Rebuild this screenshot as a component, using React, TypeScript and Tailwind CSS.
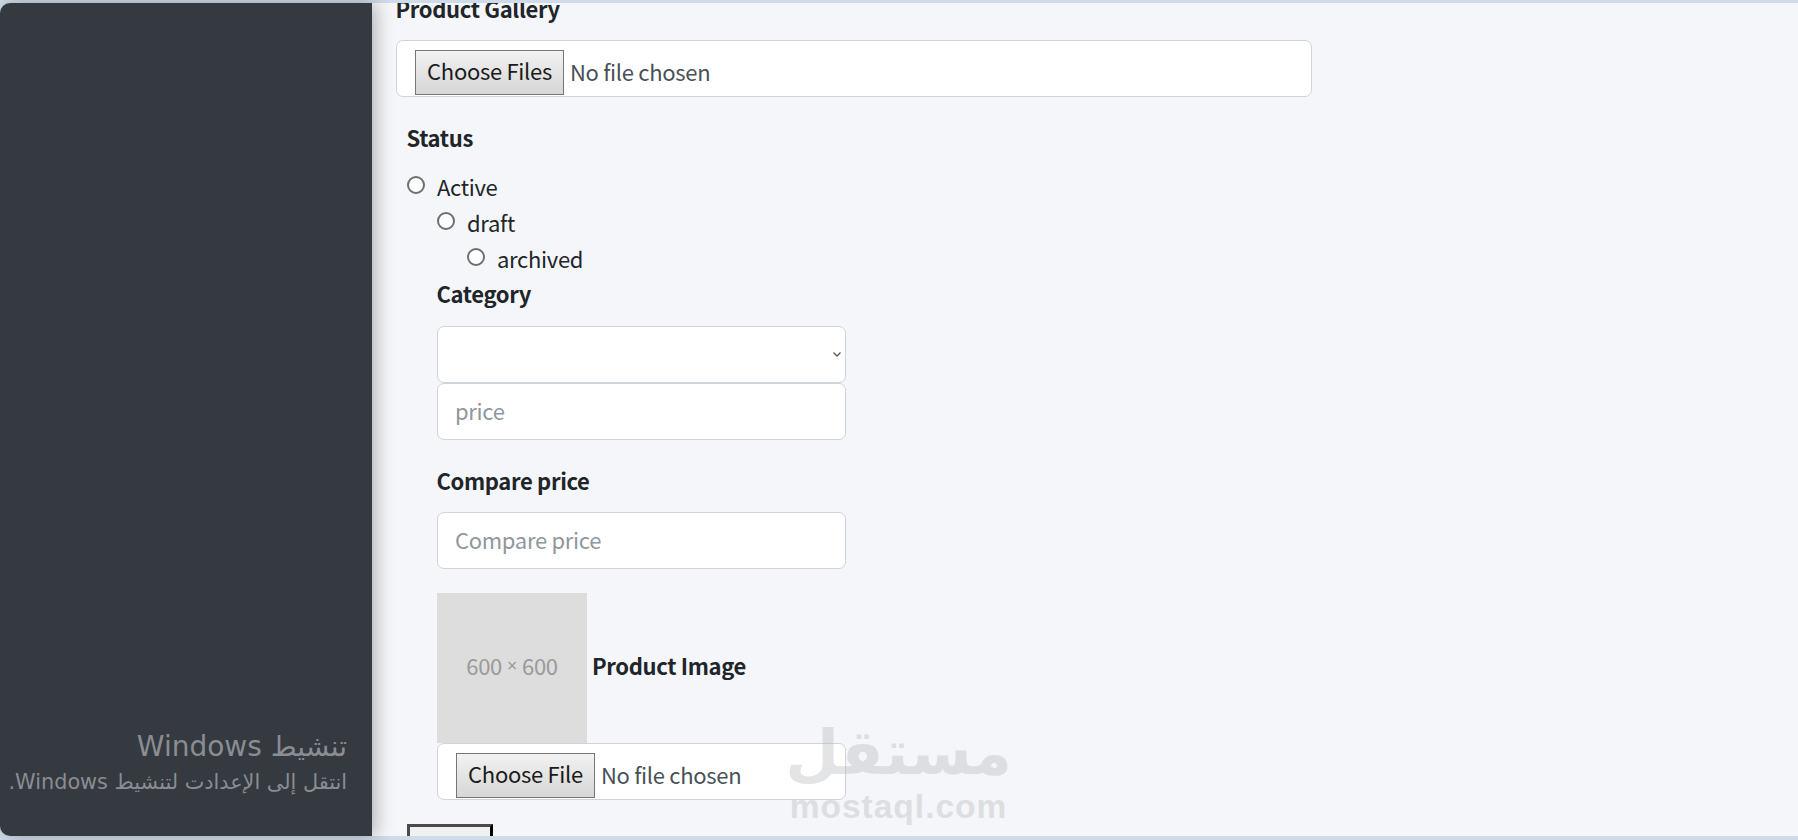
import React from 'react';

const bodyFont = "font-['Noto_Sans_CJK_SC','Noto_Sans',sans-serif]";

function FieldLabel({ children, className = '' }: { children: React.ReactNode; className?: string }) {
  return <div className={`-ml-[0.5px] h-[30px] text-[22px] font-bold leading-[27px] tracking-[-0.35px] text-[#212529] ${className}`}>{children}</div>;
}

function FileField({ label, className = '', buttonClass = '' }: { label: string; className?: string; buttonClass?: string }) {
  return (
    <div className={`flex h-[57px] items-center rounded-[7px] border border-[#ced4da] bg-white ${className}`}>
      <button
        type="button"
        className={`mt-[8px] h-[45px] shrink-0 border border-[#767676] bg-gradient-to-b from-[#f2f2f2] to-[#d6d6d6] pb-[6px] text-center text-[22px] leading-[36px] tracking-[-0.3px] text-[#1a1a1a] ${buttonClass}`}
      >
        {label}
      </button>
      <span className="ml-[6px] mt-[4px] text-[22px] leading-[30px] tracking-[-0.3px] text-[#495057]">No file chosen</span>
    </div>
  );
}

function RadioRow({ label, className = '' }: { label: string; className?: string }) {
  return (
    <label className={`flex h-[36px] items-center ${className}`}>
      <input type="radio" name="status" className="mb-[5px] h-[18px] w-[18px] appearance-none rounded-full border-2 border-[#6b6f73] bg-white" />
      <span className="ml-[12px] pb-[3px] text-[22px] leading-[30px] tracking-[-0.3px] text-[#212529]">{label}</span>
    </label>
  );
}

const inputClass =
  'block h-[57px] w-[409px] appearance-none rounded-[7px] border border-[#ced4da] bg-white pb-[3px] pl-[17px] pr-[18px] text-[22px] tracking-[-0.3px] text-[#495057] outline-none placeholder:text-[#8f979e]';

export default function App() {
  return (
    <div className={`h-[840px] w-[1798px] overflow-hidden bg-[#cfdbe8] pb-[4px] pt-[3px] ${bodyFont}`}>
      <div className="flex h-full">
        {/* Sidebar */}
        <aside className="relative z-10 w-[372px] shrink-0 rounded-l-[10px] bg-[#343a40] shadow-[4px_0_18px_rgba(0,0,0,0.28)]" />

        {/* Form column */}
        <main className="relative flex-1 overflow-hidden bg-[#f4f6f9] pl-[24px]">
          <FieldLabel className="-mt-[8px] mb-[15px]">Product Gallery</FieldLabel>
          <FileField label="Choose Files" className="w-[916px] pl-[18px]" buttonClass="w-[149px]" />

          <div className="ml-[11px]">
            <FieldLabel className="mb-[15px] mt-[27px]">Status</FieldLabel>
            <RadioRow label="Active" />
            <RadioRow label="draft" className="ml-[30px]" />
            <RadioRow label="archived" className="ml-[60px]" />

            <div className="ml-[30px]">
              <FieldLabel className="mb-[16px] mt-[3px]">Category</FieldLabel>
              <div className="relative w-[409px]">
                <select className={inputClass} />
                <svg className="absolute right-[5px] top-[26px] h-[5px] w-[8px] text-[#555555]" viewBox="0 0 8 5" fill="none" stroke="currentColor" strokeWidth="1.3">
                  <path d="M0.5 0.5 L4 4 L7.5 0.5" />
                </svg>
              </div>
              <input placeholder="price" className={inputClass} />

              <FieldLabel className="mb-[15px] mt-[27px]">Compare price</FieldLabel>
              <input placeholder="Compare price" className={inputClass} />

              <div className="mt-[24px] flex items-center">
                <div className="flex h-[150px] w-[150px] items-center justify-center bg-[#dddddd] pb-[5px] text-[22px] tracking-[-0.3px] text-[#999999]">
                  <span>600</span>
                  <span className="mx-[5px] font-['Noto_Sans',sans-serif] text-[18px]">×</span>
                  <span>600</span>
                </div>
                <span className="mb-[6px] ml-[5px] text-[22px] font-bold leading-[30px] tracking-[-0.35px] text-[#212529]">Product Image</span>
              </div>
              <FileField label="Choose File" className="w-[409px] pl-[18px]" buttonClass="w-[139px]" />
            </div>

            <button type="button" className="mt-[24px] h-[40px] w-[86px] border-[3px] border-b-0 border-l-[#4a4a4a] border-r-black border-t-[#4a4a4a] bg-[#f0f0f0]" />
          </div>
        </main>
      </div>

      {/* Windows activation notice */}
      <div dir="rtl" className="absolute left-[8px] top-[726px] z-20 w-[339px] font-['DejaVu_Sans',sans-serif] text-[#8a8d92]">
        <div className="whitespace-nowrap text-[28px] leading-[42px]">تنشيط Windows</div>
        <div className="whitespace-nowrap text-[20.8px] leading-[28px]">انتقل إلى الإعدادت لتنشيط Windows.</div>
      </div>

      {/* Site watermark */}
      <div className="pointer-events-none absolute left-[790px] top-[716px] z-20 flex w-[217px] flex-col items-center text-[#b9bcc2] opacity-40">
        <div dir="rtl" className="h-[74px] font-['DejaVu_Sans',sans-serif] text-[62px] font-bold leading-[74px]">مستقل</div>
        <div className="whitespace-nowrap font-['Liberation_Sans',sans-serif] text-[33.5px] font-bold leading-[34px] tracking-[1px]">mostaql.com</div>
      </div>
    </div>
  );
}
